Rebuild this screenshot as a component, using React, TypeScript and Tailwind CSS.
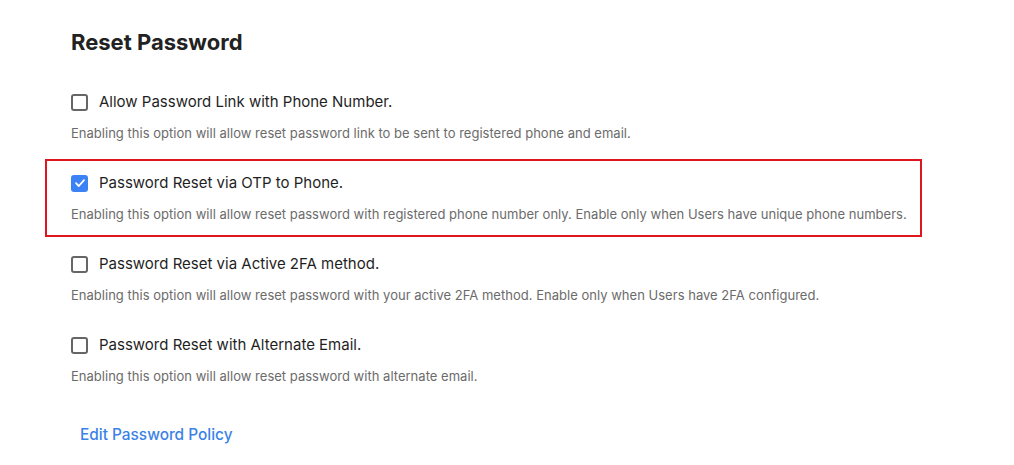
import React from "react";

const items = [
  {
    label: "Allow Password Link with Phone Number.",
    desc: "Enabling this option will allow reset password link to be sent to registered phone and email.",
    checked: false,
  },
  {
    label: "Password Reset via OTP to Phone.",
    desc: "Enabling this option will allow reset password with registered phone number only. Enable only when Users have unique phone numbers.",
    checked: true,
    highlight: true,
  },
  {
    label: "Password Reset via Active 2FA method.",
    desc: "Enabling this option will allow reset password with your active 2FA method. Enable only when Users have 2FA configured.",
    checked: false,
  },
  {
    label: "Password Reset with Alternate Email.",
    desc: "Enabling this option will allow reset password with alternate email.",
    checked: false,
  },
];

function Box({ checked }: { checked: boolean }) {
  if (checked) {
    return (
      <span className="flex h-[17px] w-[17px] shrink-0 items-center justify-center rounded-[3px] bg-[#3b82f6]">
        <svg width="12" height="12" viewBox="0 0 12 12" fill="none">
          <path d="M2 6.2 L4.8 9 L10 3.2" stroke="white" strokeWidth="1.8" strokeLinecap="round" strokeLinejoin="round" />
        </svg>
      </span>
    );
  }
  return <span className="h-[17px] w-[17px] shrink-0 rounded-[3px] border-2 border-[#666] bg-white" />;
}

export default function App() {
  return (
    <div className="h-[465px] w-[1014px] bg-white pl-[71px] pt-[28px] font-['Inter',sans-serif]">
      <h1 className="text-[22px] font-bold leading-[28px] text-[#222]">Reset Password</h1>
      <div className="mt-[44px] flex w-[877px] flex-col -ml-[26px]">
        {items.map((it, i) => (
          <div
            key={i}
            className={
              "flex h-[78px] flex-col justify-center pl-[24px] " +
              (it.highlight ? "border-2 border-[#e0161e]" : "border-2 border-transparent")
            }
            style={{ marginTop: i === 0 ? -22 : 3 }}
          >
            <label className="flex items-center gap-[11px]">
              <Box checked={it.checked} />
              <span className="text-[15px] leading-[20px] text-[#1f1f1f]">{it.label}</span>
            </label>
            <p className="mt-[12px] text-[13px] leading-[18px] tracking-[0.02px] text-[#6b6b6b]">{it.desc}</p>
          </div>
        ))}
      </div>
      <a className="ml-[9px] mt-[26px] block text-[15.4px] font-medium leading-[20px] text-[#3b82e6]">Edit Password Policy</a>
    </div>
  );
}
